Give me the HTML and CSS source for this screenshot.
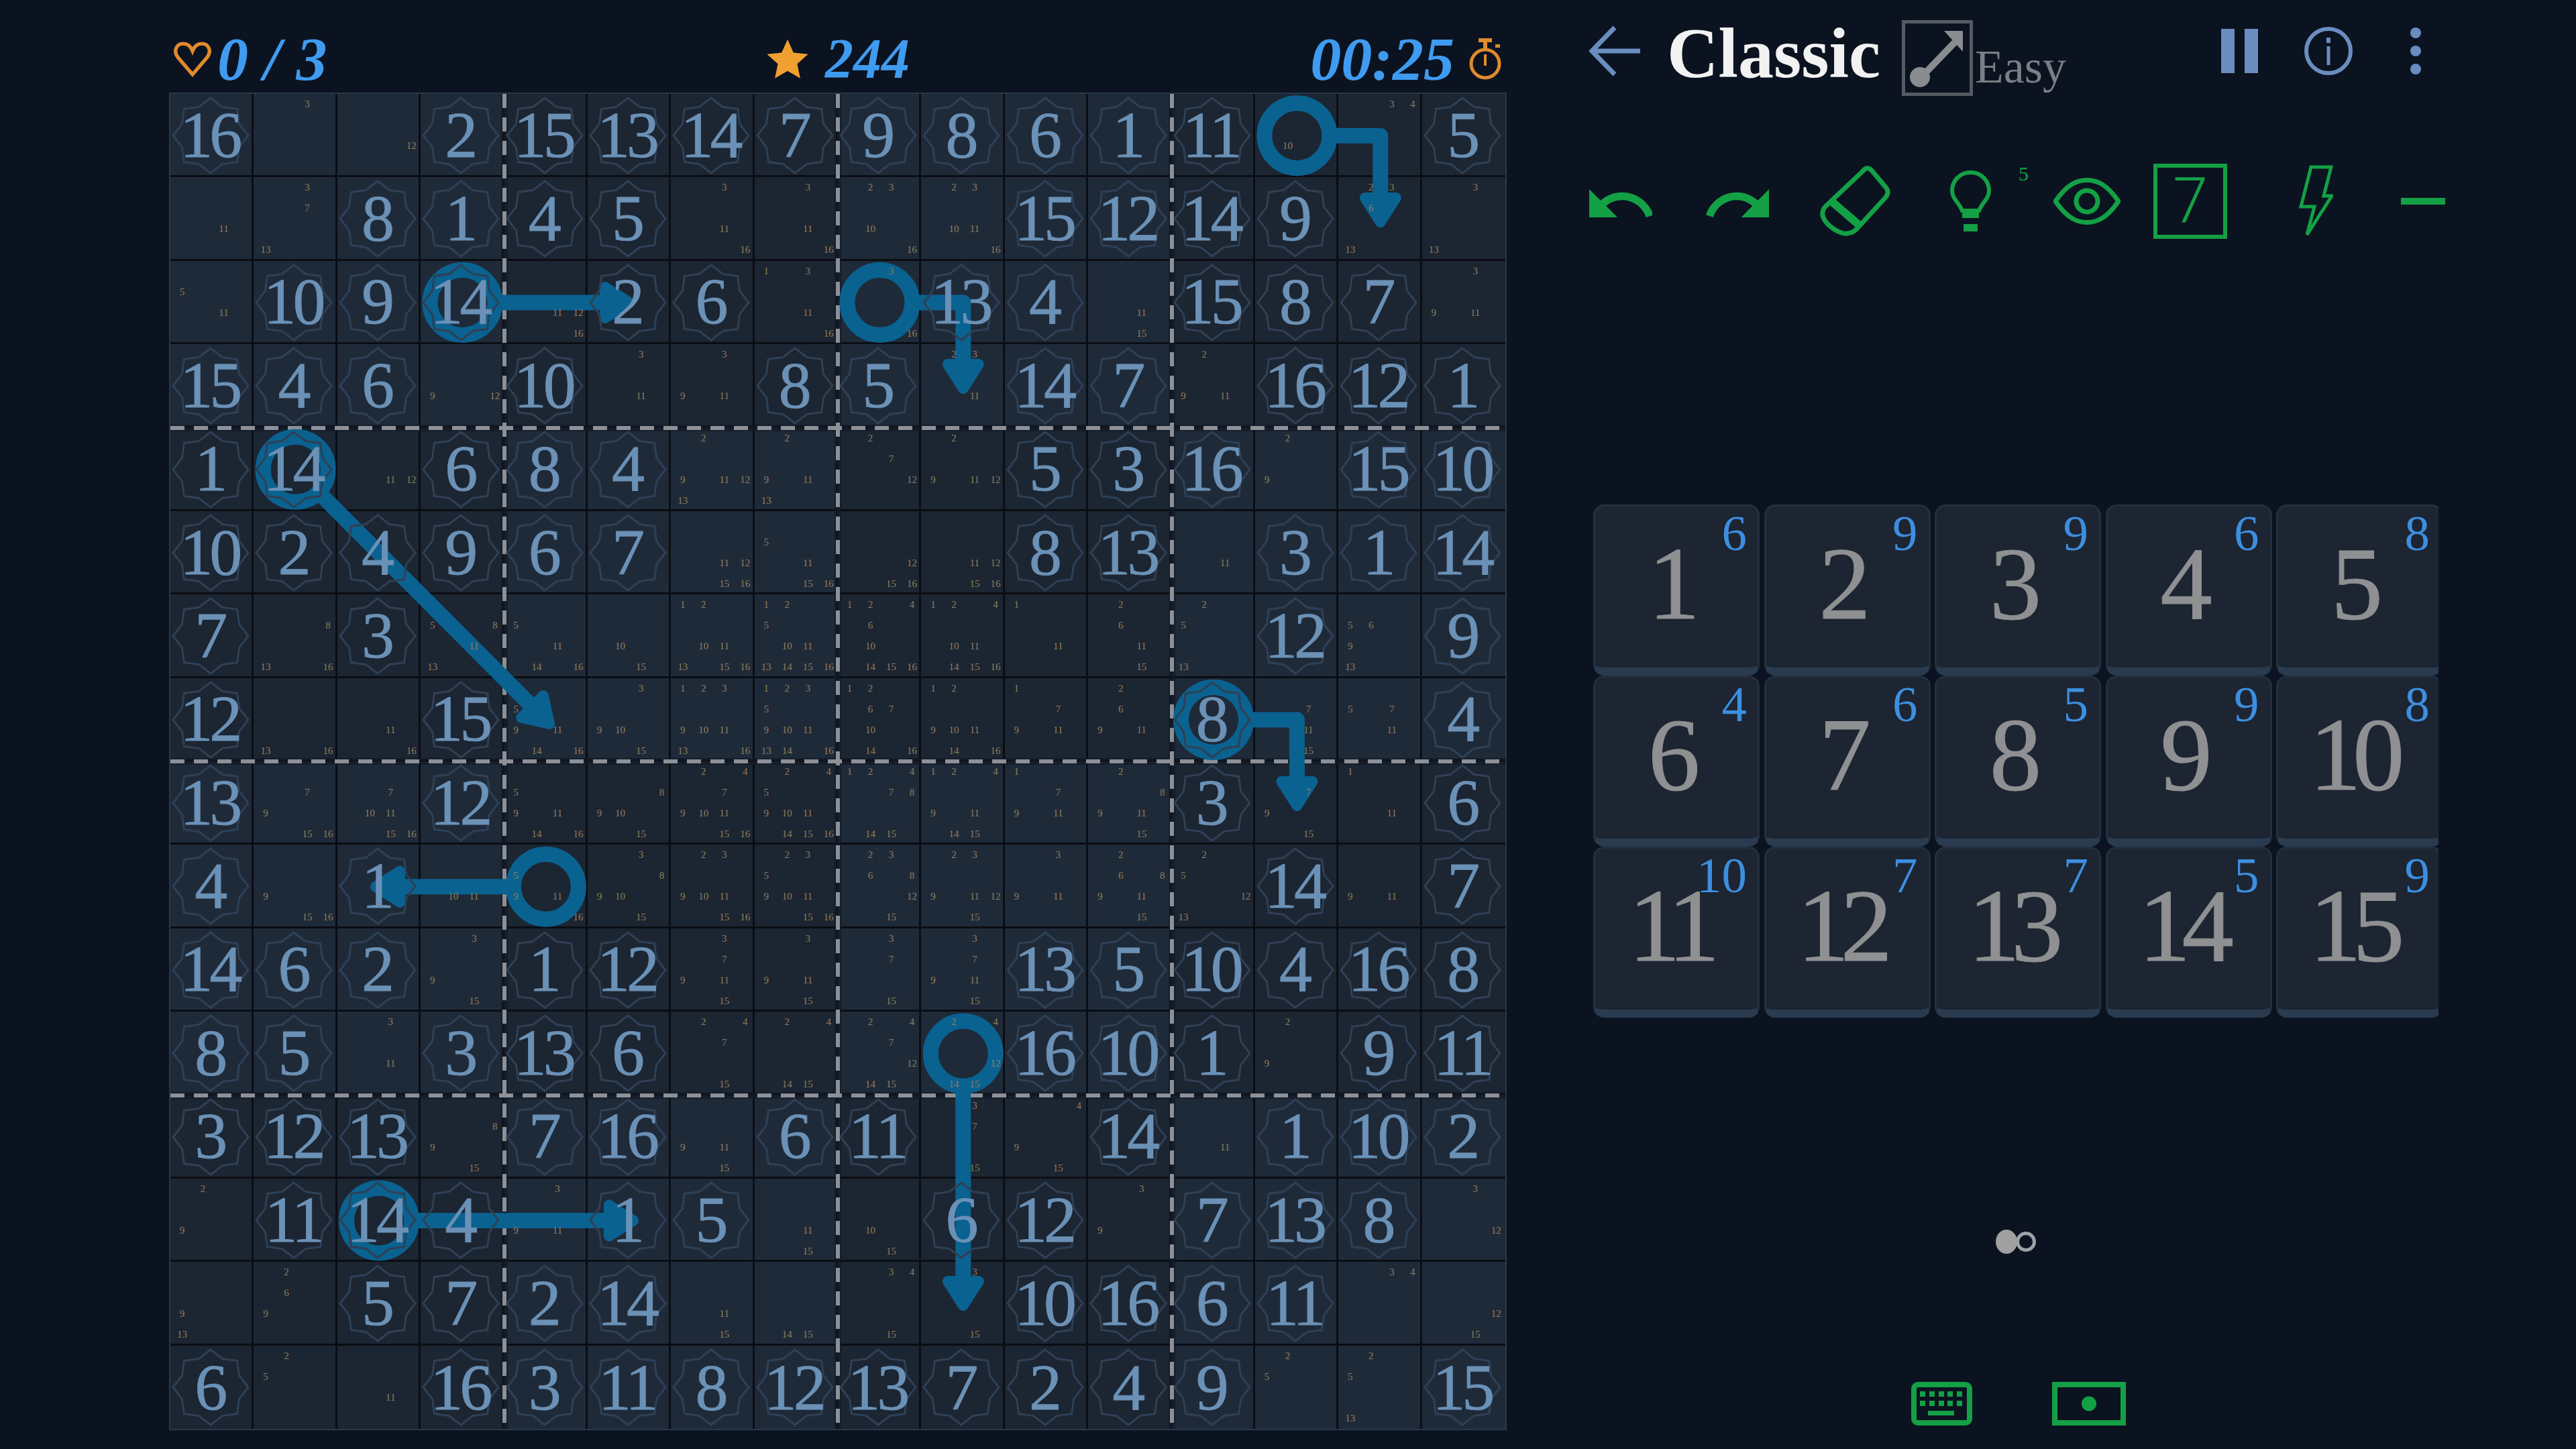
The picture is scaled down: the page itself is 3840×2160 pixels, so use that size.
FILE: index.html
```html
<!DOCTYPE html>
<html lang="en">
<head>
    <meta charset="UTF-8">
    <meta name="viewport" content="width=device-width, initial-scale=1.0">
    <title>Killer Sudoku 16x16</title>
    <link rel="stylesheet" href="styles.css">
</head>
<body>
    <div class="page">
        <main class="play">
            <header class="status">
                <div class="status-item">
                    <svg class="heart" viewBox="0 0 24 22"><path d="M12 20.5 3 10C0 6 2 1.5 6.300 1.500 9 1.500 11 3.500 12 6 13 3.500 15 1.500 17.700 1.500 22 1.500 24 6 21 10Z"/></svg>
                    <span class="stat">0 / 3</span>
                </div>
                <div class="status-item score">
                    <svg class="star" viewBox="0 0 24 24"><polygon points="12,1 15.300,8.400 23.500,9.300 17.400,14.700 19.100,22.800 12,18.700 4.900,22.800 6.600,14.700 0.500,9.300 8.700,8.400"/></svg>
                    <span class="stat score-value">244</span>
                </div>
                <div class="status-item timer">
                    <span class="stat">00:25</span>
                    <svg class="watch" viewBox="0 0 48 62">
                        <rect x="14" y="0" width="20" height="6"/>
                        <rect x="21" y="6" width="6" height="9"/>
                        <rect x="39" y="9" width="7" height="5"/>
                        <circle cx="24" cy="38" r="21"/>
                        <rect x="22" y="24" width="4" height="17"/>
                    </svg>
                </div>
            </header>

            <section class="board">
                <div class="grid" id="grid"></div>
                <svg class="overlay" viewBox="0 0 1990 1990">
                    <g class="halo">
                        <path d="M498 0V1990M995 0V1990M1493 0V1990M0 498H1990M0 995H1990M0 1493H1990"/>
                    </g>
                    <g class="dashes">
                        <path d="M498 0V1990M995 0V1990M1493 0V1990M0 498H1990M0 995H1990M0 1493H1990"/>
                    </g>
                    <g class="rings">
                        <circle cx="1679.400" cy="62.200" r="48.500"/>
                        <circle cx="435.400" cy="311" r="48.500"/>
                        <circle cx="1057.400" cy="311" r="48.500"/>
                        <circle cx="186.600" cy="559.800" r="48.500"/>
                        <circle cx="1555" cy="933" r="48.500"/>
                        <circle cx="559.800" cy="1181.800" r="48.500"/>
                        <circle cx="1181.800" cy="1430.600" r="48.500"/>
                        <circle cx="311" cy="1679.400" r="48.500"/>
                    </g>
                    <g class="shafts">
                        <path d="M1735 62.200H1803.800V170"/>
                        <path d="M490 311H660"/>
                        <path d="M1112 311H1181.800V420"/>
                        <path d="M225 598 545 919"/>
                        <path d="M1610 933H1679.400V1040"/>
                        <path d="M505 1181.800H330"/>
                        <path d="M1181.800 1485V1780"/>
                        <path d="M365 1679.400H660"/>
                    </g>
                    <g class="heads">
                        <polygon points="1780.800,155 1826.800,155 1803.800,191"/>
                        <polygon points="648,288 648,334 684,311"/>
                        <polygon points="1158.800,403 1204.800,403 1181.800,439"/>
                        <polygon points="555.800,897.200 523.200,929.800 565,939"/>
                        <polygon points="1656.400,1025 1702.400,1025 1679.400,1061"/>
                        <polygon points="342,1158.800 342,1204.800 306,1181.800"/>
                        <polygon points="1158.800,1770 1204.800,1770 1181.800,1806"/>
                        <polygon points="654,1656.400 654,1702.400 690,1679.400"/>
                    </g>
                </svg>
            </section>
        </main>

        <aside class="side">
            <div class="topbar">
                <svg class="back" viewBox="0 0 76 76"><path d="M76 38H6M38 3 4 38 38 73"/></svg>
                <h1 class="title">Classic</h1>
                <div class="level-box">
                    <svg viewBox="0 0 96 103">
                        <path class="level-line" d="M24 80 74 28"/>
                        <circle class="level-fill" cx="22" cy="80" r="15"/>
                        <polygon class="level-fill" points="58,11 86,11 86,42"/>
                    </svg>
                </div>
                <span class="level">Easy</span>
                <div class="topbar-right">
                    <div class="pause"><span></span><span></span></div>
                    <svg class="info" viewBox="0 0 74 76">
                        <circle cx="37" cy="38" r="33"/>
                        <rect x="34" y="18" width="6" height="8"/>
                        <rect x="34.500" y="31" width="5" height="28"/>
                    </svg>
                    <div class="more"><span></span><span></span><span></span></div>
                </div>
            </div>

            <div class="tools">
                <svg class="tool undo" viewBox="2 7 20.100 9" preserveAspectRatio="none"><path d="M12.500 8c-2.650 0-5.050.99-6.900 2.600L2 7v9h9l-3.620-3.620c1.390-1.160 3.160-1.880 5.120-1.880 3.540 0 6.550 2.310 7.600 5.500l2.370-.78C21.080 11.030 17.150 8 12.500 8z"/></svg>
                <svg class="tool redo" viewBox="1.540 7 20.460 9" preserveAspectRatio="none"><path d="M18.400 10.600C16.550 8.990 14.150 8 11.500 8c-4.650 0-8.580 3.030-9.960 7.220L3.900 16c1.050-3.190 4.050-5.500 7.600-5.500 1.950 0 3.730.72 5.120 1.880L13 16h9V7l-3.600 3.600z"/></svg>
                <svg class="tool eraser" viewBox="0 0 105 105">
                    <path d="M64 8C68 2 73 3 77 7L98 32C102 37 102 42 98 47L56 93C50 100 40 103 32 100 18 95 6 84 4 74 3 68 5 64 9 60Z"/>
                    <path class="eraser-band" d="M16 52 60 90"/>
                </svg>
                <div class="tool hint">
                    <svg class="bulb" viewBox="0 0 65 92">
                        <path d="M32.500 3C15 3 5 17 5 30 5 42 15 48 20 60H45C50 48 60 42 60 30 60 17 50 3 32.500 3Z"/>
                        <rect x="20" y="62" width="25" height="9"/>
                        <rect x="22" y="80" width="21" height="11"/>
                    </svg>
                    <span class="hint-count">5</span>
                </div>
                <svg class="tool eye" viewBox="0 0 100 70">
                    <path d="M3 35C20 10 35 3.500 50 3.500 65 3.500 80 10 97 35 80 60 65 66.500 50 66.500 35 66.500 20 60 3 35Z"/>
                    <circle cx="50" cy="35" r="16"/>
                </svg>
                <div class="tool seven">7</div>
                <svg class="tool bolt" viewBox="0 0 51 108"><path d="M18 3H48L37 46H49L12 104 23 62H3Z"/></svg>
                <div class="tool minus"></div>
            </div>

            <div class="pad" id="pad"></div>

            <div class="pager"><span class="dot on"></span><span class="dot"></span></div>

            <div class="modes">
                <svg class="keyboard" viewBox="0 0 91 65">
                    <rect class="mode-frame" x="4" y="4" width="83" height="57" rx="6"/>
                    <path class="mode-keys" d="M13 14h8v8h-8zM27 14h8v8h-8zM41 14h8v8h-8zM54 14h8v8h-8zM68 14h8v8h-8zM13 28h8v8h-8zM27 28h8v8h-8zM41 28h8v8h-8zM54 28h8v8h-8zM68 28h8v8h-8zM25 43h39v7H25z"/>
                </svg>
                <svg class="screen" viewBox="0 0 110 65">
                    <rect class="mode-frame" x="4" y="4" width="102" height="57"/>
                    <circle class="mode-keys" cx="55" cy="32.500" r="11"/>
                </svg>
            </div>
        </aside>
    </div>
    <script src="script.js"></script>
</body>
</html>
```

FILE: styles.css
```css
* {
    box-sizing: border-box;
}
body {
    margin: 0;
    background: #0b1320;
    font-family: 'Liberation Serif', serif;
    overflow: hidden;
}
.page {
    display: flex;
    width: 3840px;
    height: 2160px;
}
.play {
    width: 2244px;
    padding-left: 254px;
}
.status {
    display: grid;
    grid-template-columns: 1fr auto 1fr;
    align-items: center;
    height: 140px;
    padding: 36px 6px 0 4px;
}
.status-item {
    display: flex;
    align-items: center;
    gap: 8px;
}
.timer {
    justify-content: flex-end;
    gap: 22px;
}
.stat {
    color: #3f9bf0;
    font-size: 92px;
    font-style: italic;
    font-weight: bold;
    line-height: 1;
    white-space: pre;
}
.score {
    gap: 22px;
}
.score-value {
    font-size: 84px;
}
.heart {
    width: 58px;
    height: 54px;
    fill: none;
    stroke: #e08a2e;
    stroke-width: 2.200;
}
.star {
    width: 68px;
    height: 64px;
    fill: #f0a030;
}
.watch {
    width: 48px;
    height: 62px;
    fill: #e08a2e;
}
.watch circle {
    fill: none;
    stroke: #e08a2e;
    stroke-width: 5;
}

/* board */
.board {
    position: relative;
    width: 1990px;
    height: 1990px;
    outline: 4px solid #27374b;
    outline-offset: -2px;
}
.grid {
    display: grid;
    grid-template-columns: repeat(16, minmax(0, 1fr));
    grid-template-rows: repeat(16, minmax(0, 1fr));
    width: 100%;
    height: 100%;
}
.cell {
    position: relative;
    border-right: 3px solid #0a0d13;
    border-bottom: 3px solid #0a0d13;
    background: #1c2532;
}
.cell.light {
    background: #1f2a39;
}
.cell:nth-child(16n) {
    border-right: 0;
}
.cell:nth-last-child(-n+16) {
    border-bottom: 0;
}
.given {
    position: absolute;
    inset: 0;
    z-index: 2;
    display: flex;
    align-items: center;
    justify-content: center;
    color: #6b91b6;
    font-size: 98px;
    letter-spacing: -5px;
    line-height: 1;
    -webkit-text-stroke: 0.800px #6b91b6;
}
.given span {
    position: relative;
    margin-left: -5px;
}
.given svg {
    position: absolute;
    left: 2px;
    top: 4px;
    width: 116px;
    height: 116px;
    fill: none;
    stroke: #2f4055;
    stroke-width: 3;
}
.notes {
    position: relative;
    z-index: 2;
    display: grid;
    grid-template-columns: repeat(4, 31px);
    grid-auto-rows: 31px;
    padding-left: 2px;
    color: #917f5a;
    font-size: 15px;
    line-height: 31px;
    text-align: center;
}
.overlay {
    position: absolute;
    left: 0;
    top: 0;
    z-index: 1;
    width: 100%;
    height: 100%;
}
.halo path {
    fill: none;
    stroke: #111a27;
    stroke-width: 10;
    opacity: 0.700;
}
.dashes path {
    fill: none;
    stroke: #8d9096;
    stroke-width: 6;
    stroke-dasharray: 21 14;
}
.rings circle {
    fill: none;
    stroke: #0a6290;
    stroke-width: 23;
}
.shafts path {
    fill: none;
    stroke: #0a6290;
    stroke-width: 23;
    stroke-linejoin: round;
}
.heads polygon {
    fill: #0a6290;
    stroke: #0a6290;
    stroke-width: 16;
    stroke-linejoin: round;
}

/* right side */
.side {
    width: 1272px;
    padding-left: 125px;
}
.topbar {
    display: flex;
    align-items: flex-start;
    width: 1240px;
    height: 242px;
    padding-top: 30px;
}
.back {
    width: 76px;
    height: 76px;
    margin-top: 8px;
    fill: none;
    stroke: #6a8dc0;
    stroke-width: 7;
}
.title {
    margin: -14px 0 0 40px;
    color: #f2f2f2;
    font-size: 106px;
    font-weight: bold;
    line-height: 1.200;
}
.level-box {
    width: 106px;
    height: 113px;
    margin-left: 32px;
    border: 5px solid #555b63;
}
.level-box svg {
    display: block;
    width: 96px;
    height: 103px;
}
.level-line {
    fill: none;
    stroke: #8a8d90;
    stroke-width: 10;
}
.level-fill {
    fill: #8a8d90;
}
.level {
    margin: 28px 0 0 3px;
    color: #7b7f85;
    font-size: 70px;
    line-height: 1.200;
}
.topbar-right {
    display: flex;
    margin-left: auto;
    align-items: center;
    height: 76px;
    margin-top: 8px;
}
.pause {
    display: flex;
    gap: 15px;
}
.pause span {
    width: 20px;
    height: 66px;
    background: #6a8dc0;
}
.info {
    width: 74px;
    height: 76px;
    margin-left: 68px;
    fill: #6a8dc0;
}
.info circle {
    fill: none;
    stroke: #6a8dc0;
    stroke-width: 6;
}
.more {
    display: flex;
    flex-direction: column;
    gap: 11px;
    margin-left: 85px;
}
.more span {
    width: 16px;
    height: 16px;
    border-radius: 50%;
    background: #6a8dc0;
}
.tools {
    display: grid;
    grid-template-columns: 174px 170px 192px 156px 149px 217px 152px 66px;
    align-items: center;
    height: 115px;
}
.tool {
    fill: #14a045;
}
.undo,
.redo {
    width: 94px;
    height: 42px;
    margin-top: 6px;
}
.eraser {
    width: 105px;
    height: 105px;
    fill: none;
    stroke: #14a045;
    stroke-width: 7;
    stroke-linejoin: round;
}
.eraser-band {
    stroke-width: 12;
}
.hint {
    position: relative;
}
.bulb {
    display: block;
    width: 65px;
    height: 92px;
}
.bulb path {
    fill: none;
    stroke: #14a045;
    stroke-width: 6;
}
.hint-count {
    position: absolute;
    left: 104px;
    top: -12px;
    color: #14a045;
    font-size: 30px;
}
.eye {
    width: 100px;
    height: 70px;
    fill: none;
    stroke: #14a045;
    stroke-width: 7;
}
.seven {
    display: flex;
    align-items: center;
    justify-content: center;
    width: 110px;
    height: 112px;
    border: 6px solid #14a045;
    color: #14a045;
    font-family: 'Roboto', sans-serif;
    font-size: 94px;
    font-weight: 300;
    line-height: 1;
}
.bolt {
    width: 51px;
    height: 108px;
    fill: none;
    stroke: #14a045;
    stroke-width: 5;
}
.minus {
    width: 66px;
    height: 10px;
    background: #14a045;
}
.pad {
    display: grid;
    grid-template-columns: repeat(5, 248px);
    grid-auto-rows: 255px;
    column-gap: 6.500px;
    width: 1260px;
    margin: 395px 0 0 6px;
    overflow: hidden;
}
.key {
    position: relative;
    display: flex;
    align-items: center;
    justify-content: center;
    padding: 0 20px 10px 0;
    border: 3px solid #232f3f;
    border-bottom: 12px solid #2b3b4f;
    border-radius: 16px;
    background: #1c2531;
    color: #8e9091;
    font-size: 155px;
    letter-spacing: -13px;
    line-height: 1;
    -webkit-text-stroke: 1px #8e9091;
}
.key-count {
    position: absolute;
    right: 16px;
    top: 2px;
    color: #3d8ee0;
    font-size: 75px;
    letter-spacing: 0;
    -webkit-text-stroke: 0;
}
.pager {
    display: flex;
    justify-content: center;
    align-items: center;
    width: 1272px;
    margin-top: 316px;
}
.dot {
    width: 30px;
    height: 30px;
    border: 5px solid #9fa3a8;
    border-radius: 50%;
}
.dot.on {
    width: 32px;
    height: 36px;
    margin-right: -2px;
    border: 0;
    background: #a0a0a0;
}
.modes {
    display: flex;
    gap: 119px;
    margin: 191px 0 0 480px;
}
.keyboard {
    width: 91px;
    height: 65px;
}
.screen {
    width: 110px;
    height: 65px;
}
.mode-frame {
    fill: none;
    stroke: #14a045;
    stroke-width: 8;
}
.mode-keys {
    fill: #14a045;
}
```

FILE: script.js
```js
// 0 means the cell is still empty
const givens = [
    [16,0,0,2,15,13,14,7,9,8,6,1,11,0,0,5],
    [0,0,8,1,4,5,0,0,0,0,15,12,14,9,0,0],
    [0,10,9,14,0,2,6,0,0,13,4,0,15,8,7,0],
    [15,4,6,0,10,0,0,8,5,0,14,7,0,16,12,1],
    [1,14,0,6,8,4,0,0,0,0,5,3,16,0,15,10],
    [10,2,4,9,6,7,0,0,0,0,8,13,0,3,1,14],
    [7,0,3,0,0,0,0,0,0,0,0,0,0,12,0,9],
    [12,0,0,15,0,0,0,0,0,0,0,0,8,0,0,4],
    [13,0,0,12,0,0,0,0,0,0,0,0,3,0,0,6],
    [4,0,1,0,0,0,0,0,0,0,0,0,0,14,0,7],
    [14,6,2,0,1,12,0,0,0,0,13,5,10,4,16,8],
    [8,5,0,3,13,6,0,0,0,0,16,10,1,0,9,11],
    [3,12,13,0,7,16,0,6,11,0,0,14,0,1,10,2],
    [0,11,14,4,0,1,5,0,0,6,12,0,7,13,8,0],
    [0,0,5,7,2,14,0,0,0,0,10,16,6,11,0,0],
    [6,0,0,16,3,11,8,12,13,7,2,4,9,0,0,15]
];

// pencil marks, keyed by row and column
const notes = {
    "1,2":[3], "1,3":[12], "1,14":[10], "1,15":[3,4],
    "2,1":[11], "2,2":[3,7,13], "2,7":[3,11,16], "2,8":[3,11,16], "2,9":[2,3,10,16], "2,10":[2,3,10,11,16], "2,15":[2,3,6,13], "2,16":[3,13],
    "3,1":[5,11], "3,5":[11,12,16], "3,8":[1,3,11,16], "3,9":[3,16], "3,12":[11,15], "3,16":[3,9,11],
    "4,4":[9,12], "4,6":[3,11], "4,7":[3,9,11], "4,10":[2,3,11], "4,13":[2,9,11],
    "5,3":[11,12], "5,7":[2,9,11,12,13], "5,8":[2,9,11,13], "5,9":[2,7,12], "5,10":[2,9,11,12], "5,14":[2,9],
    "6,7":[11,12,15,16], "6,8":[5,11,15,16], "6,9":[12,15,16], "6,10":[11,12,15,16], "6,13":[11],
    "7,2":[8,13,16], "7,4":[5,8,11,13], "7,5":[5,11,14,16], "7,6":[10,15], "7,7":[1,2,10,11,13,15,16], "7,8":[1,2,5,10,11,13,14,15,16], "7,9":[1,2,4,6,10,14,15,16], "7,10":[1,2,4,10,11,14,15,16], "7,11":[1,11], "7,12":[2,6,11,15], "7,13":[2,5,13], "7,15":[5,6,9,13],
    "8,2":[13,16], "8,3":[11,16], "8,5":[5,9,11,14,16], "8,6":[3,9,10,15], "8,7":[1,2,3,9,10,11,13,16], "8,8":[1,2,3,5,9,10,11,13,14,16], "8,9":[1,2,6,7,10,14,16], "8,10":[1,2,9,10,11,14,16], "8,11":[1,7,9,11], "8,12":[2,6,9,11], "8,14":[7,11,15], "8,15":[5,7,11],
    "9,2":[7,9,15,16], "9,3":[7,10,11,15,16], "9,5":[5,9,11,14,16], "9,6":[8,9,10,15], "9,7":[2,4,7,9,10,11,15,16], "9,8":[2,4,5,9,10,11,14,15,16], "9,9":[1,2,4,7,8,14,15], "9,10":[1,2,4,9,11,14,15], "9,11":[1,7,9,11], "9,12":[2,8,9,11,15], "9,14":[7,9,15], "9,15":[1,11],
    "10,2":[9,15,16], "10,4":[10,11], "10,5":[5,9,11,16], "10,6":[3,8,9,10,15], "10,7":[2,3,9,10,11,15,16], "10,8":[2,3,5,9,10,11,15,16], "10,9":[2,3,6,8,12,15], "10,10":[2,3,9,11,12,15], "10,11":[3,9,11], "10,12":[2,6,8,9,11,15], "10,13":[2,5,12,13], "10,15":[9,11],
    "11,4":[3,9,15], "11,7":[3,7,9,11,15], "11,8":[3,9,11,15], "11,9":[3,7,15], "11,10":[3,7,9,11,15],
    "12,3":[3,11], "12,7":[2,4,7,15], "12,8":[2,4,14,15], "12,9":[2,4,7,12,14,15], "12,10":[2,4,12,14,15], "12,14":[2,9],
    "13,4":[8,9,15], "13,7":[9,11,15], "13,10":[3,7,15], "13,11":[4,9,15], "13,13":[11],
    "14,1":[2,9], "14,5":[3,9,11], "14,8":[11,15], "14,9":[10,15], "14,12":[3,9], "14,16":[3,12],
    "15,1":[9,13], "15,2":[2,6,9], "15,7":[11,15], "15,8":[14,15], "15,9":[3,4,15], "15,10":[3,15], "15,15":[3,4], "15,16":[12,15],
    "16,2":[2,5], "16,3":[11], "16,14":[2,5], "16,15":[2,5,13]
};

const keys = [[1,6],[2,9],[3,9],[4,6],[5,8],[6,4],[7,6],[8,5],[9,9],[10,8],[11,10],[12,7],[13,7],[14,5],[15,9]];

function starPoints() {
    const points = [];
    for (let i = 0; i < 16; i++) {
        const radius = i % 2 === 0 ? 56 : 46;
        const angle = i * Math.PI / 8 - Math.PI / 2;
        points.push((58 + radius * Math.cos(angle)).toFixed(1) + "," + (58 + radius * Math.sin(angle)).toFixed(1));
    }
    return points.join(" ");
}

const star = `<svg viewBox="0 0 116 116"><polygon points="${starPoints()}"/></svg>`;
let html = "";
givens.forEach((row, r) => {
    row.forEach((value, c) => {
        const light = (Math.floor(r / 4) + Math.floor(c / 4)) % 2 === 0;
        let inner = "";
        if (value) {
            inner = `<div class="given">${star}<span>${value}</span></div>`;
        } else {
            const marks = notes[(r + 1) + "," + (c + 1)] || [];
            inner = '<div class="notes">';
            for (let n = 1; n <= 16; n++) {
                inner += `<span>${marks.includes(n) ? n : ""}</span>`;
            }
            inner += "</div>";
        }
        html += `<div class="cell${light ? " light" : ""}">${inner}</div>`;
    });
});
document.getElementById("grid").innerHTML = html;

document.getElementById("pad").innerHTML = keys
    .map(k => `<div class="key">${k[0]}<span class="key-count">${k[1]}</span></div>`)
    .join("");
```
